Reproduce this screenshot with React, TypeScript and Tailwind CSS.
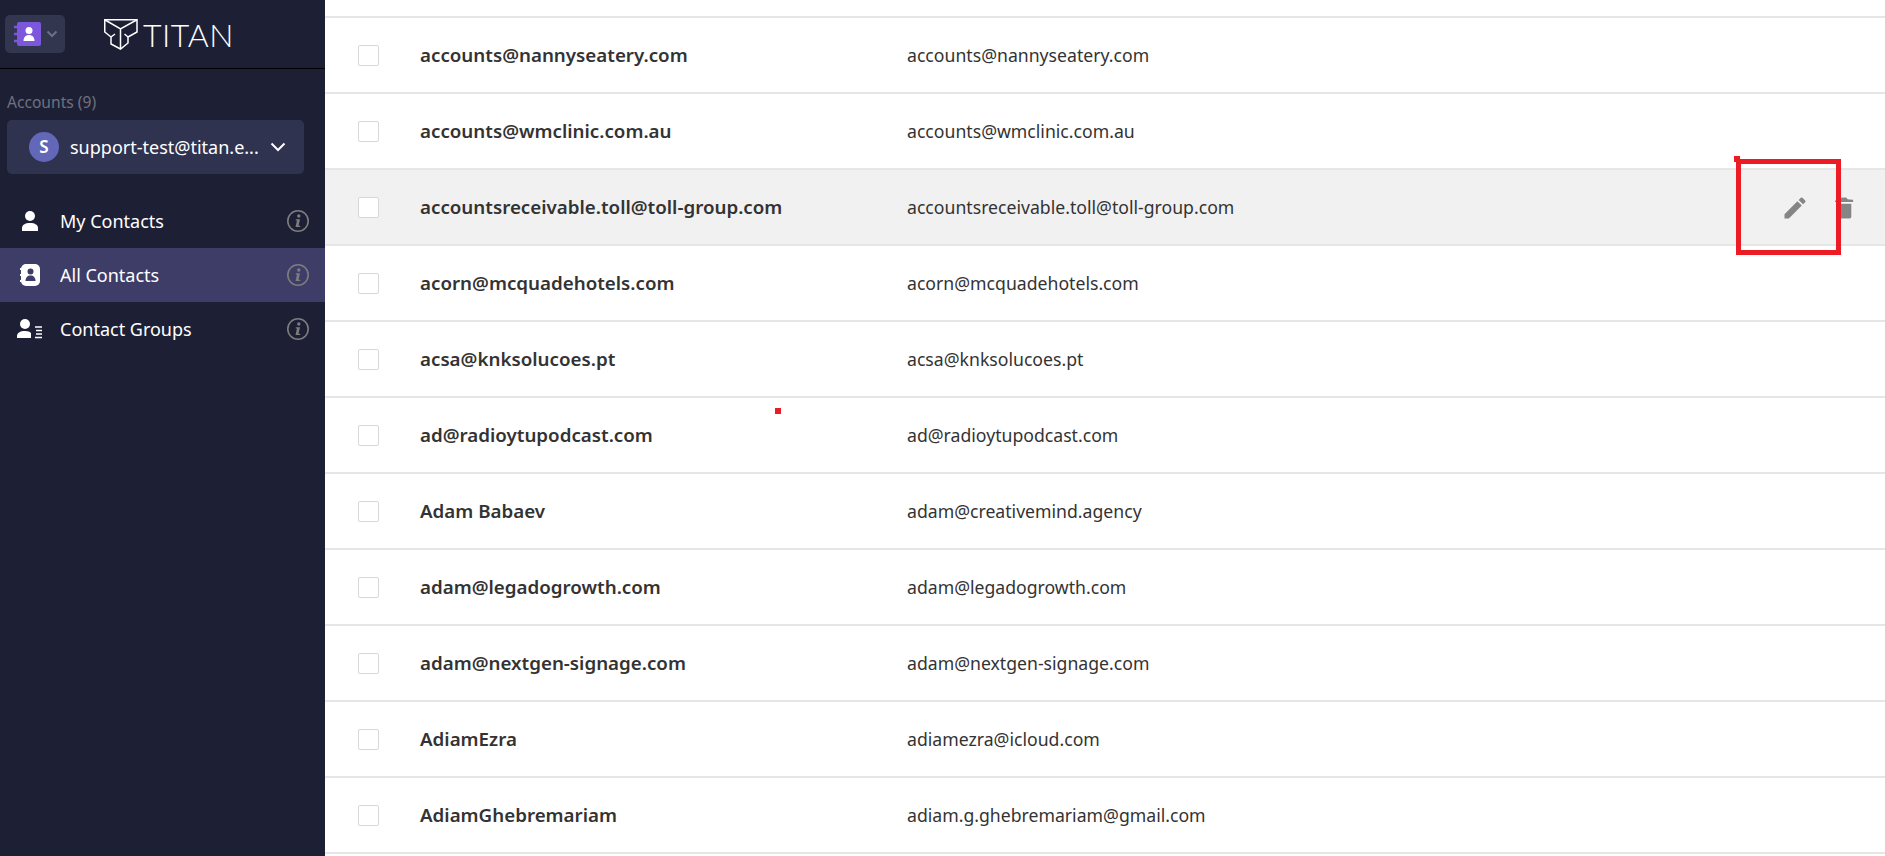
import React from "react";

const rows = [
  ["accounts@nannyseatery.com", "accounts@nannyseatery.com"],
  ["accounts@wmclinic.com.au", "accounts@wmclinic.com.au"],
  ["accountsreceivable.toll@toll-group.com", "accountsreceivable.toll@toll-group.com"],
  ["acorn@mcquadehotels.com", "acorn@mcquadehotels.com"],
  ["acsa@knksolucoes.pt", "acsa@knksolucoes.pt"],
  ["ad@radioytupodcast.com", "ad@radioytupodcast.com"],
  ["Adam Babaev", "adam@creativemind.agency"],
  ["adam@legadogrowth.com", "adam@legadogrowth.com"],
  ["adam@nextgen-signage.com", "adam@nextgen-signage.com"],
  ["AdiamEzra", "adiamezra@icloud.com"],
  ["AdiamGhebremariam", "adiam.g.ghebremariam@gmail.com"],
];

function Info() {
  return (
    <svg width="24" height="24" viewBox="0 0 24 24" className="shrink-0">
      <circle cx="12" cy="12" r="10.2" fill="none" stroke="#7d7d7d" strokeWidth="1.6" />
      <circle cx="12.8" cy="7" r="1.7" fill="#7d7d7d" />
      <path d="M9.800 10.200h4.200l-1.500 6.500h1.700v1.200H9.500l1.500-6.500H9.800z" fill="#7d7d7d" />
    </svg>
  );
}

function NavItem({ icon, label, active }: { icon: React.ReactNode; label: string; active?: boolean }) {
  return (
    <div className={`flex h-[54px] items-center pr-[15px] ${active ? "bg-[#3d3d68]" : ""}`}>
      <div className="flex w-[60px] shrink-0 justify-center">{icon}</div>
      <span className="flex-1 text-[18px] text-white">{label}</span>
      <Info />
    </div>
  );
}

function Row({ name, email, hover }: { name: string; email: string; hover?: boolean }) {
  return (
    <div className={`flex h-[76px] shrink-0 items-center border-b-2 border-[#e6e6e6] pt-[1px] ${hover ? "bg-[#f1f1f1]" : "bg-white"}`}>
      <div className="ml-[33px] h-[21px] w-[21px] shrink-0 rounded-[2px] border border-[#d8d8d8] bg-white" />
      <div className="ml-[41px] w-[487px] shrink-0 text-[18.75px] font-semibold text-[#333333]">{name}</div>
      <div className="text-[17.65px] text-[#333333]">{email}</div>
      {hover && (
        <div className="ml-auto mr-[30px] flex items-center gap-[24px]">
          <svg width="28" height="28" viewBox="0 0 24 24" fill="#858585">
            <path d="M3 17.25V21h3.75L17.81 9.94l-3.75-3.75L3 17.25zM20.71 7.04a1 1 0 0 0 0-1.41l-2.34-2.34a1 1 0 0 0-1.41 0l-1.83 1.83 3.75 3.75 1.83-1.83z" />
          </svg>
          <svg width="22" height="24" viewBox="0 0 24 26" fill="#858585" className="[filter:drop-shadow(0_0_1px_#ffffff)]">
            <path d="M4 8.500h16v14a2 2 0 0 1-2 2H6a2 2 0 0 1-2-2z" />
            <path d="M2 6.500 3 4l5-.5L9.500 1.500h5L16 3.500l6 .5v2.500z" />
          </svg>
        </div>
      )}
    </div>
  );
}

export default function App() {
  return (
    <div className="relative flex h-[856px] w-[1885px] overflow-hidden bg-white font-['Noto_Sans',sans-serif]">
      <aside className="flex w-[325px] shrink-0 flex-col bg-[#1d2035]">
        <div className="flex h-[69px] shrink-0 items-start border-b border-black">
          <div className="ml-[5px] mt-[15px] flex h-[38px] w-[60px] items-center rounded-[5px] bg-[#33364f] pl-[9px]">
            <svg width="27" height="24" viewBox="0 0 27 24">
              <rect x="3" y="0" width="24" height="24" rx="2" fill="#7c56dc" />
              <path d="M0 5h5M0 12h5M0 19h5" stroke="#7c56dc" strokeWidth="2.500" strokeLinecap="round" />
              <circle cx="15" cy="8.500" r="3.500" fill="#fff" />
              <path d="M9.500 19c0-4 2.500-6 5.500-6s5.500 2 5.500 6z" fill="#fff" />
            </svg>
            <svg width="12" height="8" viewBox="0 0 12 8" className="ml-[5px]">
              <path d="M1.500 1.500 6 6l4.500-4.500" fill="none" stroke="#6c6f8c" strokeWidth="2" />
            </svg>
          </div>
          <div className="ml-[39px] mt-[19px] flex items-center">
            <svg width="34" height="31" viewBox="0 0 34 31" fill="none" stroke="#fff" strokeWidth="1.500">
              <path d="M.75.75H33V13l-9 5v6l-7.500 6-9.500-5v-7L.75 13z" />
              <path d="M.75.75 16.500 10 33 .75M16.500 10v20M7 18l4-3M24 18l-3.500-3" />
            </svg>
            <span className="ml-[5px] text-[32px] leading-[30px] font-light tracking-[0.5px] text-white font-['Lato',sans-serif]">TITAN</span>
          </div>
        </div>

        <div className="ml-[7px] mt-[23px] text-[15.6px] leading-[20px] text-[#6f7180]">Accounts (9)</div>
        <div className="ml-[7px] mt-[8px] flex h-[54px] w-[297px] shrink-0 items-center rounded-[5px] bg-[#2f3350] pl-[22px]">
          <div className="flex h-[30px] w-[30px] items-center justify-center rounded-full bg-[#6367b8] text-[17px] font-semibold text-white">S</div>
          <span className="ml-[11px] text-[18px] text-white">support-test@titan.e...</span>
          <svg width="16" height="10" viewBox="0 0 16 10" className="ml-[11px]">
            <path d="M1.500 1.500 8 8l6.500-6.500" fill="none" stroke="#fff" strokeWidth="2" />
          </svg>
        </div>

        <nav className="mt-[20px] flex flex-col">
          <NavItem
            label="My Contacts"
            icon={
              <svg width="18" height="20" viewBox="0 0 18 20" fill="#fff">
                <circle cx="9" cy="5" r="5" />
                <path d="M1 20v-3c0-3 3-5 8-5s8 2 8 5v3z" />
              </svg>
            }
          />
          <NavItem
            active
            label="All Contacts"
            icon={
              <svg width="20" height="22" viewBox="0 0 20 22">
                <rect x="1" y="0" width="19" height="22" rx="5" fill="#fff" />
                <path d="M1 5H0M1 11H0M1 17H0" stroke="#fff" strokeWidth="2" />
                <circle cx="10.500" cy="7.500" r="3" fill="#3d3d68" />
                <path d="M5.500 17c0-3.500 2-5.500 5-5.500s5 2 5 5.500z" fill="#3d3d68" />
              </svg>
            }
          />
          <NavItem
            label="Contact Groups"
            icon={
              <svg width="26" height="20" viewBox="0 0 26 20" fill="#fff">
                <circle cx="8" cy="5" r="5" />
                <path d="M0 19v-2c0-3 3-5 8-5 3 0 5 .8 6 2v5z" />
                <path d="M18 8h7M19 11.500h6M19 15h6M18 18.500h7" stroke="#fff" strokeWidth="1.300" />
              </svg>
            }
          />
        </nav>
      </aside>

      <main className="flex min-w-0 flex-1 flex-col">
        <div className="h-[18px] shrink-0 border-b-2 border-[#e6e6e6]" />
        {rows.map((r, i) => (
          <Row key={r[0]} name={r[0]} email={r[1]} hover={i === 2} />
        ))}
      </main>

      <div className="absolute left-[1736px] top-[159px] h-[96px] w-[105px] border-[5px] border-[#ed1c24]" />
      <div className="absolute left-[1734px] top-[156px] h-[6px] w-[6px] bg-[#ed1c24]" />
      <div className="absolute left-[775px] top-[408px] h-[6px] w-[6px] bg-[#ed1c24]" />
    </div>
  );
}
